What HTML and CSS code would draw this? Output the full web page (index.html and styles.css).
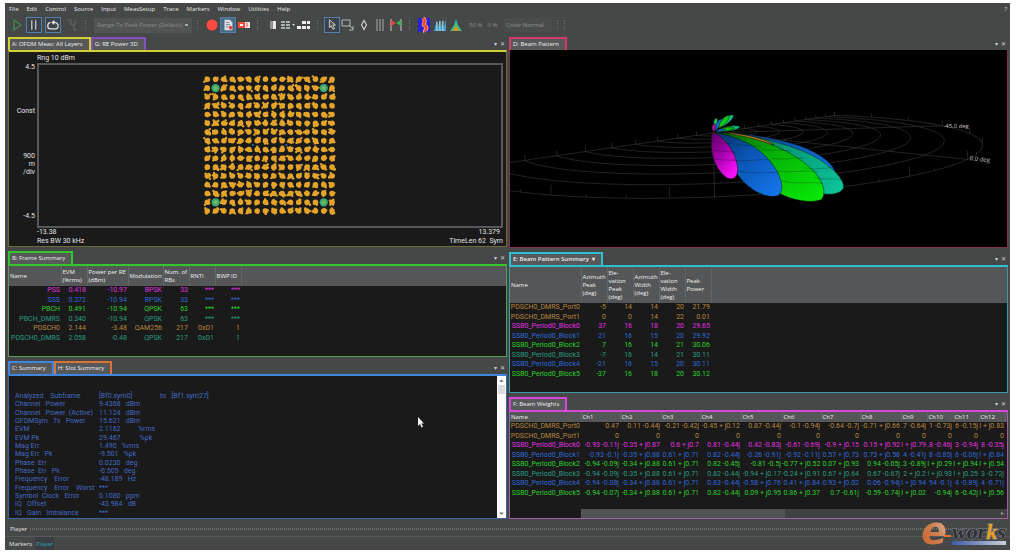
FILE: index.html
```html
<!DOCTYPE html>
<html lang="en">
<head>
    <meta charset="UTF-8">
    <meta name="viewport" content="width=device-width, initial-scale=1.0">
    <title>Vector Signal Analyzer</title>
    <link rel="stylesheet" href="styles.css">
</head>
<body>

<div class="app">
    <nav class="menu">
        <a href="#">File</a>
        <a href="#">Edit</a>
        <a href="#">Control</a>
        <a href="#">Source</a>
        <a href="#">Input</a>
        <a href="#">MeasSetup</a>
        <a href="#">Trace</a>
        <a href="#">Markers</a>
        <a href="#">Window</a>
        <a href="#">Utilities</a>
        <a href="#">Help</a>
        <a href="#" class="menu-help">?</a>
    </nav>

    <div class="toolbar">
        <div class="tools">
            <button class="tool" aria-label="Run"><svg viewBox="0 0 16 16"><path d="M4 3l7 5-7 5z" fill="none" stroke="#3f8a55" stroke-width="1.2"/></svg></button>
            <button class="tool on" aria-label="Pause"><svg viewBox="0 0 16 16"><path d="M5.500 2.500v11M10 2.500v11" stroke="#d8d8d8" stroke-width="1.300"/></svg></button>
            <button class="tool on spaced" aria-label="Repeat"><svg viewBox="0 0 16 16"><path d="M5 5C1 6 1 12.500 5 12.500h6C15 12.500 15 5.500 10 5H7.500" fill="none" stroke="#e4e4e4" stroke-width="1.400"/><path d="M9.500 2L6 5l3.500 3z" fill="#e4e4e4"/></svg></button>
            <button class="tool" disabled aria-label="Step"><svg viewBox="0 0 16 16"><path d="M3 3h4v5h3v5h3M11 3v5" fill="none" stroke="#66696a"/></svg></button>
        </div>
        <span class="grip"></span>
        <select class="range" disabled aria-label="Range">
            <option>Range To Peak Power (Default)</option>
        </select>
        <span class="grip"></span>
        <div class="tools">
            <button class="tool" aria-label="Record"><svg viewBox="0 0 16 16"><circle cx="8" cy="8" r="5.500" fill="#ff4a40"/></svg></button>
            <button class="tool on lit" aria-label="Recording notes"><svg viewBox="0 0 16 16"><path d="M4 2h6l3 3v9H4z" fill="#dde3e8"/><path d="M5.500 5h4M5.500 7.500h5M5.500 10h3" stroke="#6d7e8c"/><circle cx="11" cy="11" r="2.200" fill="#e04840"/></svg></button>
            <button class="tool" aria-label="Playback"><svg viewBox="0 0 16 16"><path d="M2 5h12v6H2z" fill="#f2e6e2"/><path d="M2 5h7v6H2z" fill="#ef4a3e"/><path d="M4 7h3v2H4z" fill="#fff"/><path d="M11 6v4" stroke="#ef4a3e"/></svg></button>
        </div>
        <span class="grip"></span>
        <div class="tools">
            <button class="tool" aria-label="Single window"><svg viewBox="0 0 16 16"><path d="M6 4h6v8H6z" fill="#8d8f90"/><path d="M9 4h3v8H9z" fill="#e6e6e6"/></svg></button>
            <button class="tool" aria-label="Layout"><svg viewBox="0 0 16 16"><path d="M1 5h4M6 5h4M1 8h4M6 8h4M1 11h4M6 11h4" stroke="#d0d0d0" stroke-width="1.600"/><path d="M12 7h3l-1.500 2z" fill="#d0d0d0"/></svg></button>
            <button class="tool" aria-label="Tiles"><svg viewBox="0 0 16 16"><path d="M6 4h4v3H6zM11 4h3v3h-3zM1 9h4v3H1zM6 9h4v3H6zM11 9h3v3h-3z" fill="#ededed"/></svg></button>
        </div>
        <span class="grip"></span>
        <div class="tools">
            <button class="tool on" aria-label="Pointer"><svg viewBox="0 0 16 16"><path d="M5 2v9l2-2 2 4 2-1-2-4h3z" fill="#555" stroke="#d8d8d8"/></svg></button>
            <button class="tool" aria-label="Zoom area"><svg viewBox="0 0 16 16"><path d="M2 3h8v6H2z" fill="none" stroke="#b5b5b5"/><path d="M9 8l4 4M13 9v4H9" stroke="#b5b5b5" fill="none"/></svg></button>
            <button class="tool" aria-label="Marker"><svg viewBox="0 0 16 16"><path d="M8 3.500l2.500 4.500L8 12.500 5.500 8z" fill="none" stroke="#d0d0d0" stroke-width="1.200"/></svg></button>
            <button class="tool" aria-label="Bands"><svg viewBox="0 0 16 16"><path d="M5 2v12M8 2v12M11 2v12" stroke="#a9abab"/></svg></button>
            <button class="tool" aria-label="Limits"><svg viewBox="0 0 16 16"><path d="M3 2v12M13 2v12" stroke="#c8c8c8"/><path d="M3 3l5 3-5 3z" fill="#e8453c"/><path d="M13 3L8 6l5 3z" fill="#35b454"/></svg></button>
        </div>
        <span class="grip"></span>
        <div class="tools">
            <button class="tool" aria-label="Color map"><svg viewBox="0 0 16 16"><path d="M2 1h12v14H2z" fill="#2a22d8"/><path d="M7 1c5 4-2 6 2 8s-1 4 0 6" fill="none" stroke="#f0a070" stroke-width="4"/><path d="M7 1c5 4-2 6 2 8s-1 4 0 6" fill="none" stroke="#e8402c" stroke-width="2"/></svg></button>
            <button class="tool" aria-label="Spectrogram"><svg viewBox="0 0 16 16"><path d="M2 14L5 3v11zM5 14L8 2v12zM8 14l3-12v12zM11 14l3-12v12z" fill="#3ba6d0"/><path d="M5 14V5M8 14V4M11 14V4" stroke="#bfe6f2"/></svg></button>
            <button class="tool" aria-label="Density"><svg viewBox="0 0 16 16"><path d="M8 2l2 6 4 6H2l4-6z" fill="#20b0c8"/><path d="M8 5l2 5 3 4H3l3-4z" fill="#54c043"/><path d="M8 9l3 5H5z" fill="#f08a28"/></svg></button>
        </div>
        <span class="dim">50 %</span>
        <span class="dim">0 %</span>
        <input class="dim color-name" type="text" value="Color Normal" disabled aria-label="Color">
        <span class="grip"></span>
        <span class="grip"></span>
    </div>

    <main class="panes">
        <div class="column">
            <section class="pane yellow pane-meas">
                <header class="pane-head">
                    <button class="tab">A: OFDM Meas: All Layers</button>
                    <button class="tab purple">G: RE Power 3D</button>
                    <span class="pane-tools"><button aria-label="Menu">▾</button><button aria-label="Close">✕</button></span>
                </header>
                <div class="pane-body chart">
                    <div class="chart-range">Rng 10 dBm</div>
                    <div class="chart-axis">
                        <span>4.5</span>
                        <span>Const</span>
                        <span>900<br>m<br>/div</span>
                        <span>-4.5</span>
                    </div>
                    <div class="chart-plot">
                        <svg id="constellation" viewBox="0 0 461 163"></svg>
                    </div>
                    <div class="chart-foot"><span>-13.38</span><span class="inset">13.379</span></div>
                    <div class="chart-foot"><span>Res BW 30 kHz</span><span>TimeLen 62&nbsp; Sym</span></div>
                </div>
            </section>

            <section class="pane green pane-frame">
                <header class="pane-head">
                    <button class="tab">B: Frame Summary</button>
                    <span class="pane-tools"><button aria-label="Menu">▾</button><button aria-label="Close">✕</button></span>
                </header>
                <div class="pane-body">
                    <div class="head-band">
                    <table class="frame-table">
                        <colgroup><col class="w52"><col class="w26"><col class="w41"><col class="w35"><col class="w26"><col class="w26"><col class="w26"></colgroup>
                        <thead>
                            <tr><th>Name</th><th>EVM<br>(%rms)</th><th>Power per RE<br>(dBm)</th><th>Modulation</th><th>Num. of<br>RBs</th><th>RNTI</th><th>BWP ID</th></tr>
                        </thead>
                        <tbody>
                            <tr class="c-magenta"><td>PSS</td><td>0.418</td><td>-10.97</td><td>BPSK</td><td>33</td><td>***</td><td>***</td></tr>
                            <tr class="c-blue"><td>SSS</td><td>0.372</td><td>-10.94</td><td>BPSK</td><td>33</td><td>***</td><td>***</td></tr>
                            <tr class="c-green"><td>PBCH</td><td>0.491</td><td>-10.94</td><td>QPSK</td><td>63</td><td>***</td><td>***</td></tr>
                            <tr class="c-teal"><td>PBCH_DMRS</td><td>0.340</td><td>-10.94</td><td>QPSK</td><td>63</td><td>***</td><td>***</td></tr>
                            <tr class="c-orange"><td>PDSCH0</td><td>2.144</td><td>-3.48</td><td>QAM256</td><td>217</td><td>0xD1</td><td>1</td></tr>
                            <tr class="c-teal"><td>PDSCH0_DMRS</td><td>2.058</td><td>-0.48</td><td>QPSK</td><td>217</td><td>0xD1</td><td>1</td></tr>
                        </tbody>
                    </table>
                    </div>
                </div>
            </section>

            <section class="pane blue pane-summary">
                <header class="pane-head">
                    <button class="tab">C: Summary</button>
                    <button class="tab orange">H: Slot Summary</button>
                    <span class="pane-tools"><button aria-label="Menu">▾</button><button aria-label="Close">✕</button></span>
                </header>
                <div class="pane-body summary">
                    <div class="summary-text">
                        <table class="summary-table">
                            <tr><td>Analyzed    Subframe</td><td>[Bf0.sym0]                to   [Bf1.sym27]</td></tr>
                            <tr><td>Channel   Power</td><td>9.4368   dBm</td></tr>
                            <tr><td>Channel   Power  (Active)</td><td>11.124   dBm</td></tr>
                            <tr><td>OFDMSym   Tx   Power</td><td>15.621   dBm</td></tr>
                            <tr><td>EVM</td><td>2.1162          %rms</td></tr>
                            <tr><td>EVM Pk</td><td>29.467           %pk</td></tr>
                            <tr><td>Mag Err</td><td>1.490   %rms</td></tr>
                            <tr><td>Mag Err   Pk</td><td>-9.501   %pk</td></tr>
                            <tr><td>Phase  Err</td><td>0.0230   deg</td></tr>
                            <tr><td>Phase  Err   Pk</td><td>-0.505   deg</td></tr>
                            <tr><td>Frequency    Error</td><td>-48.189   Hz</td></tr>
                            <tr><td>Frequency    Error    Worst</td><td>***</td></tr>
                            <tr><td>Symbol  Clock   Error</td><td>0.1080   ppm</td></tr>
                            <tr><td>IQ   Offset</td><td>-43.984   dB</td></tr>
                            <tr><td>IQ   Gain   Imbalance</td><td>***</td></tr>
                            <tr><td>IQ   Quad   Error</td><td>***</td></tr>
                        </table>
                    </div>
                    <div class="scroll-v"><button aria-label="Scroll up"><svg viewBox="0 0 8 8"><path d="M2 5l2-2 2 2z"/></svg></button><span class="thumb-v"></span><button class="push" aria-label="Scroll down"><svg viewBox="0 0 8 8"><path d="M2 3l2 2 2-2z"/></svg></button></div>
                    <svg class="pointer" viewBox="0 0 8 11"><path d="M1 0v9l2-2 1.500 3.500 1.500-.7L4.500 6.500H7z" fill="#f2f2f2"/></svg>
                </div>
            </section>
        </div>

        <div class="column">
            <section class="pane pink pane-beam">
                <header class="pane-head">
                    <button class="tab">D: Beam Pattern</button>
                    <span class="pane-tools"><button aria-label="Menu">▾</button><button aria-label="Close">✕</button></span>
                </header>
                <div class="pane-body beam">
                    <svg viewBox="15 45 1491 594">
                        <defs>
                            <linearGradient id="gm" x1="0" y1="0" x2=".6" y2="1"><stop offset="0" stop-color="#5a0060"/><stop offset=".5" stop-color="#a000a8"/><stop offset="1" stop-color="#f810f8"/></linearGradient>
                            <linearGradient id="gb" x1="0" y1="0" x2="1" y2="1"><stop offset="0" stop-color="#06305f"/><stop offset=".4" stop-color="#0a54b0"/><stop offset="1" stop-color="#1478f0"/></linearGradient>
                            <linearGradient id="gg" x1="0" y1="0" x2="1" y2="1"><stop offset="0" stop-color="#046004"/><stop offset=".4" stop-color="#06b006"/><stop offset="1" stop-color="#08ec08"/></linearGradient>
                            <linearGradient id="gt" x1="0" y1="0" x2="1" y2="1"><stop offset="0" stop-color="#045a48"/><stop offset=".4" stop-color="#089a78"/><stop offset="1" stop-color="#0cc89c"/></linearGradient>
                        </defs>
                        <path id="rings" class="rings"/>
                        <g stroke="#041008" stroke-width="1.500">
                            <path d="M640 293C720 294 830 312 900 340C960 365 990 395 994 420C960 400 850 330 640 293z" fill="url(#gb)"/>
                            <path d="M640 293C740 300 850 326 925 364C982 395 1020 435 1017 460C1010 480 975 482 950 478C880 420 760 320 640 293z" fill="url(#gt)"/>
                            <path d="M660 293C720 298 780 312 808 332C760 328 710 310 660 293z" fill="#c07818"/>
                            <path d="M640 293C760 306 850 345 905 390C955 430 968 475 950 496C925 508 860 500 820 475C790 400 730 320 640 293z" fill="url(#gg)"/>
                            <path d="M630 294C720 310 775 350 803 390C834 432 838 470 820 484C785 495 735 468 705 430C670 390 640 340 630 294z" fill="url(#gb)"/>
                            <path d="M622 292C660 310 690 350 697 395C701 428 686 440 664 430C625 400 610 345 622 292z" fill="url(#gm)"/>
                            <path d="M627 288C622 270 626 252 634 250C640 256 636 275 627 288z" fill="#0ad060"/>
                            <path d="M629 290C630 270 640 250 651 253C652 266 640 282 629 290z" fill="#1468d0"/>
                            <path d="M642 280C652 254 668 238 686 241C684 256 664 272 642 280z" fill="#0cc090"/>
                            <path d="M640 280C645 254 662 241 673 243C672 258 656 274 640 280z" fill="#10c818"/>
                            <path d="M635 290C655 276 690 270 706 276C698 288 660 292 635 290z" fill="#0cc47c"/>
                            <path d="M635 290C650 278 670 274 688 280C680 290 655 292 635 290z" fill="#10b818"/>
                            <path d="M632 291C640 282 650 280 662 285C652 292 640 292 632 291z" fill="#1468d0"/>
                            <path d="M625 291C617 282 620 268 629 267C634 276 632 286 625 291z" fill="#b010a0"/>
                        </g>
                        <g fill="none" stroke="#000" stroke-opacity=".35" stroke-width="2">
                            <path d="M618 320C640 325 665 325 680 328M618 345C645 352 670 350 692 354M624 372C650 380 680 374 697 380M695 330C730 335 750 332 770 338M680 375C720 385 770 372 790 376M700 410C750 420 800 410 822 416M770 345C810 350 840 345 860 350M800 372C850 378 880 366 900 372M815 410C860 416 910 405 940 414M830 440C880 452 930 440 955 448M900 400C940 410 970 395 1000 402M930 430C960 438 995 430 1012 436"/>
                        </g>
                        <text class="deg" x="1318" y="279">-45.0 deg</text>
                        <text class="deg" x="1397" y="377" transform="rotate(6 1397 377)">0.0 deg</text>
                    </svg>
                </div>
            </section>

            <section class="pane cyan pane-pattern">
                <header class="pane-head">
                    <button class="tab strong">E: Beam Pattern Summary &nbsp;▾</button>
                    <span class="pane-tools"><button aria-label="Menu">▾</button><button aria-label="Close">✕</button></span>
                </header>
                <div class="pane-body">
                    <div class="head-band tall">
                    <table class="pattern-table">
                        <colgroup><col class="w71"><col class="w26"><col class="w26"><col class="w26"><col class="w26"><col class="w26"></colgroup>
                        <thead>
                            <tr><th>Name</th><th>Azimuth<br>Peak<br>(deg)</th><th>Ele-<br>vation<br>Peak<br>(deg)</th><th>Azimuth<br>Width<br>(deg)</th><th>Ele-<br>vation<br>Width<br>(deg)</th><th>Peak<br>Power</th></tr>
                        </thead>
                        <tbody>
                            <tr class="c-orange"><td>PDSCH0_DMRS_Port0</td><td>-5</td><td>14</td><td>14</td><td>20</td><td>21.79</td></tr>
                            <tr class="c-orange"><td>PDSCH0_DMRS_Port1</td><td>0</td><td>0</td><td>14</td><td>22</td><td>0.01</td></tr>
                            <tr class="c-magenta"><td>SSB0_Period0_Block0</td><td>37</td><td>16</td><td>18</td><td>20</td><td>29.65</td></tr>
                            <tr class="c-blue"><td>SSB0_Period0_Block1</td><td>21</td><td>16</td><td>15</td><td>20</td><td>29.92</td></tr>
                            <tr class="c-green"><td>SSB0_Period0_Block2</td><td>7</td><td>16</td><td>14</td><td>21</td><td>30.06</td></tr>
                            <tr class="c-teal"><td>SSB0_Period0_Block3</td><td>-7</td><td>16</td><td>14</td><td>21</td><td>30.11</td></tr>
                            <tr class="c-blue"><td>SSB0_Period0_Block4</td><td>-21</td><td>16</td><td>15</td><td>20</td><td>30.11</td></tr>
                            <tr class="c-green"><td>SSB0_Period0_Block5</td><td>-37</td><td>16</td><td>18</td><td>20</td><td>30.12</td></tr>
                        </tbody>
                    </table>
                    </div>
                </div>
            </section>

            <section class="pane violet pane-weights">
                <header class="pane-head">
                    <button class="tab">F: Beam Weights</button>
                    <span class="pane-tools"><button aria-label="Menu">▾</button><button aria-label="Close">✕</button></span>
                </header>
                <div class="pane-body weights">
                    <div class="head-band low">
                    <table class="weights-table">
                        <colgroup><col class="w71"><col class="w39"><col class="w41"><col class="w39"><col class="w41"><col class="w41"><col class="w39"><col class="w39"><col class="w41"><col class="w26"><col class="w26"><col class="w26"><col class="w26"></colgroup>
                        <thead>
                            <tr><th>Name</th><th>Ch1</th><th>Ch2</th><th>Ch3</th><th>Ch4</th><th>Ch5</th><th>Ch6</th><th>Ch7</th><th>Ch8</th><th>Ch9</th><th>Ch10</th><th>Ch11</th><th>Ch12</th></tr>
                        </thead>
                        <tbody>
                            <tr class="c-orange"><td>PDSCH0_DMRS_Port0</td><td>0.47</td><td>0.11 -0.44j</td><td>-0.21 -0.42j</td><td>-0.45 + j0.12</td><td>0.87 -0.44j</td><td>-0.1 -0.94j</td><td>-0.64 -0.7j</td><td>-0.71 + j0.66</td><td>.7 -0.64j</td><td>1 -0.73j</td><td>6 -0.15j</td><td>I + j0.83</td></tr>
                            <tr class="c-orange"><td>PDSCH0_DMRS_Port1</td><td>0</td><td>0</td><td>0</td><td>0</td><td>0</td><td>0</td><td>0</td><td>0</td><td>0</td><td>0</td><td>0</td><td>0</td></tr>
                            <tr class="c-magenta"><td>SSB0_Period0_Block0</td><td>-0.93 -0.11j</td><td>-0.35 + j0.87</td><td>0.6 + j0.7</td><td>0.81 -0.44j</td><td>0.42 -0.83j</td><td>-0.61 -0.69j</td><td>-0.9 + j0.15</td><td>0.15 + j0.92</td><td>I + j0.79</td><td>.8 -0.46j</td><td>3 -0.94j</td><td>8 -0.35j</td></tr>
                            <tr class="c-blue"><td>SSB0_Period0_Block1</td><td>-0.93 -0.1j</td><td>-0.35 + j0.88</td><td>0.61 + j0.71</td><td>0.82 -0.44j</td><td>-0.26 -0.91j</td><td>-0.92 -0.11j</td><td>0.57 + j0.73</td><td>0.73 + j0.58</td><td>4 -0.41j</td><td>8 -0.85j</td><td>6 -0.06j</td><td>I + j0.84</td></tr>
                            <tr class="c-green"><td>SSB0_Period0_Block2</td><td>-0.94 -0.09j</td><td>-0.34 + j0.88</td><td>0.61 + j0.71</td><td>0.82 -0.45j</td><td>-0.81 -0.5j</td><td>-0.77 + j0.52</td><td>0.07 + j0.93</td><td>0.94 -0.05j</td><td>.3 -0.89j</td><td>I + j0.29</td><td>I + j0.94</td><td>I + j0.54</td></tr>
                            <tr class="c-teal"><td>SSB0_Period0_Block3</td><td>-0.94 -0.09j</td><td>-0.35 + j0.88</td><td>0.61 + j0.71</td><td>0.82 -0.44j</td><td>-0.94 + j0.17</td><td>-0.24 + j0.91</td><td>0.67 + j0.64</td><td>0.67 -0.67j</td><td>2 + j0.2</td><td>! + j0.93</td><td>! + j0.25</td><td>3 -0.72j</td></tr>
                            <tr class="c-blue"><td>SSB0_Period0_Block4</td><td>-0.94 -0.08j</td><td>-0.34 + j0.88</td><td>0.61 + j0.71</td><td>0.83 -0.44j</td><td>-0.58 + j0.76</td><td>0.41 + j0.84</td><td>0.93 + j0.02</td><td>0.06 -0.94j</td><td>I + j0.94</td><td>94 -0.1j</td><td>4 -0.89j</td><td>4 -0.71j</td></tr>
                            <tr class="c-green"><td>SSB0_Period0_Block5</td><td>-0.94 -0.07j</td><td>-0.34 + j0.88</td><td>0.61 + j0.71</td><td>0.82 -0.44j</td><td>0.09 + j0.95</td><td>0.86 + j0.37</td><td>0.7 -0.61j</td><td>-0.59 -0.74j</td><td>I + j0.02</td><td>-0.94j</td><td>6 -0.42j</td><td>I + j0.56</td></tr>
                        </tbody>
                    </table>
                    </div>
                    <div class="scroll-h"><span class="thumb-h"></span><span class="scroll-arrow">▸</span></div>
                </div>
            </section>
        </div>
    </main>

    <footer class="player">
        <div class="player-head"><span>Player</span><span class="player-rule"></span></div>
        <div class="player-tabs">
            <button>Markers</button>
            <button class="current">Player</button>
        </div>
    </footer>

    <svg class="logo" viewBox="0 0 88 28" role="img" aria-label="e-works">
        <defs>
            <linearGradient id="le" x1="0" y1="1" x2="1" y2="0"><stop offset="0" stop-color="#c8602c"/><stop offset=".5" stop-color="#cf7d4c"/><stop offset="1" stop-color="#d8c8b8"/></linearGradient>
            <linearGradient id="lb"><stop offset="0" stop-color="#3c5ca8"/><stop offset="1" stop-color="#c8d0dc"/></linearGradient>
        </defs>
        <text x="1" y="25" class="logo-e" fill="url(#le)">e</text>
        <path d="M24 16h7v2h-7z" fill="#e0702c"/>
        <text x="32" y="20" class="logo-works">wor<tspan fill="#e8a020">k</tspan>s</text>
        <path d="M32 22h54v4H32z" fill="url(#lb)"/>
    </svg>
</div>

<script src="script.js"></script>
</body>
</html>
```

FILE: styles.css
```css
* {
    box-sizing: border-box;
}
body {
    margin: 0;
    padding: 3px 7px 4px 5px;
    height: 100vh;
    background: #fff;
    font-family: "Open Sans", "Noto Sans", sans-serif;
    font-size: 6px;
    line-height: 8px;
    color: #e4e4e4;
}
button, select, input {
    font: inherit;
    color: inherit;
    margin: 0;
    padding: 0;
    border: 0;
    background: none;
}
.app {
    position: relative;
    display: flex;
    flex-direction: column;
    height: 100%;
    background: #464848;
}
.menu {
    display: flex;
    gap: 8px;
    padding: 2px 3px 0 4px;
    height: 13px;
}
.menu a {
    color: #e4e4e4;
    text-decoration: none;
}
.menu-help {
    margin-left: auto;
}

/* toolbar */
.toolbar {
    display: flex;
    align-items: center;
    gap: 5px;
    height: 18px;
    padding-left: 5px;
}
.tools {
    display: flex;
}
.tool {
    width: 16px;
    height: 16px;
}
.tool svg {
    display: block;
    width: 100%;
    height: 100%;
}
.tool.on {
    border: 1px solid #4f7fae;
    background: #3c4248;
}
.tool.lit {
    background: #4d6a84;
}
.spaced {
    margin: 0 3px;
}
.grip {
    width: 2px;
    height: 10px;
    border-left: 1px dotted #6a6c6c;
}
.range {
    appearance: none;
    width: 98px;
    height: 15px;
    margin-left: 2px;
    padding: 0 3px;
    background: #525454 linear-gradient(#aaa, #aaa) no-repeat right 4px center / 3px 2px;
    color: #8a8c8c;
    opacity: 1;
}
.dim {
    color: #8c8e8e;
}
.color-name {
    width: 48px;
    height: 14px;
    margin-left: 2px;
    padding: 0 2px;
    background: #4b4d4d;
}

/* panes */
.panes {
    display: grid;
    grid-template-columns: 1fr 1fr;
    gap: 2px;
    flex: 1;
    min-height: 0;
    padding: 3px 2px 0 3px;
}
.column {
    display: flex;
    flex-direction: column;
    gap: 4px;
    min-width: 0;
    min-height: 0;
}
.pane {
    display: flex;
    flex-direction: column;
    flex-basis: 0;
    min-height: 0;
    --edge: #888;
}
.pane-meas { flex-grow: 210; }
.pane-frame { flex-grow: 106; }
.pane-summary { flex-grow: 158; }
.pane-beam { flex-grow: 211; }
.pane-pattern { flex-grow: 141; }
.pane-weights { flex-grow: 122; }
.yellow { --edge: #d2cf35; --side: #6b6d35; }
.green { --edge: #35c52c; --side: #5c9a5a; }
.blue { --edge: #3e86e0; --side: #35659a; }
.pink { --edge: #d23a6c; --side: #84324c; }
.cyan { --edge: #2cc0d2; --side: #3a9aa6; }
.violet { --edge: #d848d8; --side: #a060a8; }
.purple { --edge: #8450c0; }
.orange { --edge: #d8743a; }
.pane-head {
    display: flex;
    align-items: flex-end;
    height: 13px;
    flex: none;
}
.tab {
    height: 13px;
    padding: 0 6px 2px 2px;
    border: 2px solid var(--edge);
    border-width: 2px 2px 0;
    background: #56585a;
    color: #f0f0f0;
}
.strong {
    font-weight: 600;
}
.pane-tools {
    margin-left: auto;
    display: flex;
    gap: 3px;
    padding: 0 2px 2px 0;
    color: #d0d0d0;
}
.pane-body {
    flex: 1;
    min-height: 0;
    overflow: hidden;
    border: 1px solid var(--side);
    border-top: 2px solid var(--edge);
    background: #1a1a1a;
}

/* constellation chart */
.chart {
    display: grid;
    grid-template-columns: 28px 1fr;
    grid-template-rows: 11px 1fr 9px 9px;
    padding-right: 3px;
    font-family: Roboto, "Liberation Sans", sans-serif;
    font-size: 7px;
}
.chart-range, .chart-foot {
    grid-column: 2;
}
.chart-range {
    padding-top: 2px;
}
.chart-axis {
    display: flex;
    flex-direction: column;
    justify-content: space-between;
    padding: 0 2px 8px 0;
    text-align: right;
}
.chart-plot {
    min-height: 0;
    border: 2px solid #565859;
}
.chart-plot svg {
    display: block;
    width: 100%;
    height: 100%;
}
.chart-foot {
    display: flex;
    justify-content: space-between;
    line-height: 9px;
}
.inset {
    padding-right: 3px;
}

/* tables */
table {
    border-collapse: collapse;
    table-layout: fixed;
    width: 0;
    font-family: Roboto, "Liberation Sans", sans-serif;
    font-size: 7px;
    line-height: 9px;
}
th, td {
    padding: 0 1px 0 0;
    white-space: nowrap;
}
th {
    padding: 0 0 0 1px;
    border-right: 1px solid #626464;
    text-align: left;
    font-weight: 400;
    font-family: "Open Sans", "Noto Sans", sans-serif;
    font-size: 6px;
    line-height: 8px;
    color: #f0f0f0;
}
td {
    text-align: right;
}
tbody tr {
    height: 9px;
}
tbody tr:nth-child(even) {
    height: 10px;
}
thead tr {
    height: 20px;
}
.tall thead tr {
    height: 36px;
}
.low thead tr {
    height: 10px;
}
.head-band {
    background: linear-gradient(#555657, #555657) no-repeat top / 100% 20px;
}
.tall {
    background-size: 100% 36px;
}
.low {
    background-size: 100% 10px;
}
.w26 { width: 26px; }
.w35 { width: 35px; }
.w39 { width: 39px; }
.w41 { width: 41px; }
.w52 { width: 52px; }
.w71 { width: 71px; }
.c-magenta { color: #e030e0; }
.c-blue { color: #2f68d8; }
.c-green { color: #2cd02c; }
.c-teal { color: #2a9a80; }
.c-orange { color: #b8863a; }

/* summary text */
.summary {
    position: relative;
    display: flex;
}
.summary-text {
    flex: 1;
    min-width: 0;
    overflow: hidden;
    padding: 16px 0 0 6px;
}
.summary-table {
    table-layout: auto;
    line-height: 8px;
    color: #4468c0;
}
.summary-table td {
    white-space: pre;
    text-align: left;
}
.summary-table td:first-child {
    min-width: 84px;
    padding-right: 0;
}
.summary-table tbody tr {
    height: 8px;
}
.summary-table tbody tr:nth-child(3n) {
    height: 9px;
}
.scroll-v {
    display: flex;
    flex-direction: column;
    width: 9px;
    background: #fcfcfc;
}
.scroll-v button {
    height: 9px;
}
.scroll-v svg {
    display: block;
    width: 9px;
    fill: #666;
}
.scroll-v .push {
    margin-top: auto;
}
.thumb-v {
    height: 9px;
    margin: 0 1px;
    background: #dcdcdc;
}
.pointer {
    position: absolute;
    left: 82%;
    top: 41px;
    width: 8px;
}

/* beam pattern */
.beam {
    border-top: 0;
    background: #000;
}
.beam svg {
    display: block;
    width: 100%;
    height: 100%;
}
.rings {
    fill: none;
    stroke: #343434;
    stroke-width: 2;
}
.deg {
    font-size: 18px;
    fill: #c4c4c4;
}

/* beam weights */
.weights {
    display: flex;
    flex-direction: column;
}
.scroll-h {
    display: flex;
    justify-content: space-between;
    height: 9px;
    margin: auto 0 0 71px;
    background: #404142;
}
.thumb-h {
    width: 48%;
    background: #505253;
}
.scroll-arrow {
    padding-right: 3px;
    color: #999;
}

/* player */
.player-head {
    display: flex;
    align-items: center;
    gap: 3px;
    height: 18px;
    padding: 3px 3px 0 5px;
    border-bottom: 1px solid #585a5a;
}
.player-rule {
    flex: 1;
    height: 2px;
    border-top: 1px dotted #6a6c6c;
    border-bottom: 1px dotted #6a6c6c;
}
.player-tabs {
    display: flex;
    gap: 3px;
    height: 13px;
    padding-left: 4px;
}
.player-tabs .current {
    padding: 0 1px;
    background: #3a3e40;
    color: #28a0b8;
}
.logo {
    position: absolute;
    right: 2px;
    bottom: 3px;
    width: 88px;
    height: 28px;
    overflow: visible;
}
.logo-e {
    font: italic bold 38px "DejaVu Sans", sans-serif;
}
.logo-works {
    font: italic bold 22px "Liberation Serif", serif;
    fill: #2c3036;
    stroke: #7c8088;
    stroke-width: 1px;
    paint-order: stroke;
}
```

FILE: script.js
```js
const SVG = 'http://www.w3.org/2000/svg';

let seed = 7;
function rand() {
    seed = (seed * 16807) % 2147483647;
    return seed / 2147483647;
}

function dot(parent, x, y, r, color) {
    const c = document.createElementNS(SVG, 'circle');
    c.setAttribute('cx', x.toFixed(1));
    c.setAttribute('cy', y.toFixed(1));
    c.setAttribute('r', r);
    c.setAttribute('fill', color);
    parent.appendChild(c);
}

// 256QAM cloud: 16 x 16 points, each a small ragged blob
function drawConstellation() {
    const svg = document.getElementById('constellation');
    const corners = [[1, 1], [14, 1], [1, 14], [14, 14]];
    for (const [c, r] of corners) {
        dot(svg, 167 + c * 8.42, 14.5 + r * 8.89, 4.2, '#35a878');
    }
    for (let row = 0; row < 16; row++) {
        for (let col = 0; col < 16; col++) {
            const x = 167 + col * 8.42;
            const y = 14.5 + row * 8.89;
            const pilot = corners.some(p => p[0] === col && p[1] === row);
            dot(svg, x, y, pilot ? 2 : 2.8, pilot ? '#7cb858' : '#e4a42a');
            for (let i = 0; i < 4 && !pilot; i++) {
                dot(svg, x + (rand() - 0.5) * 6, y + (rand() - 0.5) * 6, 1.2, '#e4a42a');
            }
        }
    }
    dot(svg, 213, 81, 1, '#3a6cc8');
    dot(svg, 247, 81, 1, '#3a6cc8');
}

// ground plane of the 3D view: u runs along the -90/+90 line, v towards 0 deg
function project(u, v) {
    const w = 1 + 0.371 * u - 0.45 * v;
    return [625 + (500 * u + 421 * v) / w, 295 + (-72.7 * u + 44 * v) / w, w];
}

function drawRings() {
    let d = '';
    for (let r = 1; r <= 10; r++) {
        for (let a = 0; a <= 180; a += 3) {
            const t = a * Math.PI / 180;
            const [x, y] = project(Math.cos(t) * r / 10, Math.sin(t) * r / 10);
            d += (a === 0 ? 'M' : 'L') + x.toFixed(1) + ' ' + y.toFixed(1);
        }
    }
    for (const a of [0, 45, 90, 130, 180]) {
        const t = a * Math.PI / 180;
        const [x, y] = project(Math.cos(t), Math.sin(t));
        d += 'M625 295L' + x.toFixed(1) + ' ' + y.toFixed(1);
    }
    for (let a = 0; a <= 180; a += 5) {
        const t = a * Math.PI / 180;
        const [x, y, w] = project(Math.cos(t), Math.sin(t));
        d += 'M' + x.toFixed(1) + ' ' + y.toFixed(1) + 'v' + (-(a % 15 ? 4 : 14) / w).toFixed(1);
    }
    for (let u = -0.9; u < 1; u += 0.1) {
        const [x, y, w] = project(u, 0);
        d += 'M' + x.toFixed(1) + ' ' + y.toFixed(1) + 'v' + (-12 / w).toFixed(1);
    }
    document.getElementById('rings').setAttribute('d', d);
}

drawConstellation();
drawRings();
```
